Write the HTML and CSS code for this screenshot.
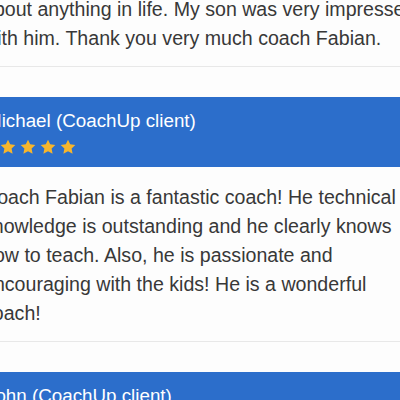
FILE: index.html
```html
<!DOCTYPE html>
<html lang="en">
<head>
    <meta charset="UTF-8">
    <title>CoachUp Reviews</title>
    <link rel="stylesheet" href="styles.css">
</head>
<body>
    <div class="reviews">
        <div class="review">
            <div class="review-body">
                <p>about anything in life. My son was very impressed with him. Thank you very much coach Fabian.</p>
            </div>
        </div>

        <div class="review">
            <div class="review-head">
                <h3>Michael (CoachUp client)</h3>
                <div class="stars">
                    <svg viewBox="0 0 24 24"><path d="M12 1l3.3 7 7.7 1-5.6 5.3 1.5 7.7L12 18.2 5.1 22l1.5-7.7L1 9l7.7-1z"/></svg>
                    <svg viewBox="0 0 24 24"><path d="M12 1l3.3 7 7.7 1-5.6 5.3 1.5 7.7L12 18.2 5.1 22l1.5-7.7L1 9l7.7-1z"/></svg>
                    <svg viewBox="0 0 24 24"><path d="M12 1l3.3 7 7.7 1-5.6 5.3 1.5 7.7L12 18.2 5.1 22l1.5-7.7L1 9l7.7-1z"/></svg>
                    <svg viewBox="0 0 24 24"><path d="M12 1l3.3 7 7.7 1-5.6 5.3 1.5 7.7L12 18.2 5.1 22l1.5-7.7L1 9l7.7-1z"/></svg>
                    <svg viewBox="0 0 24 24"><path d="M12 1l3.3 7 7.7 1-5.6 5.3 1.5 7.7L12 18.2 5.1 22l1.5-7.7L1 9l7.7-1z"/></svg>
                </div>
            </div>
            <div class="review-body">
                <p>Coach Fabian is a fantastic coach! He technical knowledge is outstanding and he clearly knows how to teach. Also, he is passionate and encouraging with the kids! He is a wonderful coach!</p>
            </div>
        </div>

        <div class="review">
            <div class="review-head">
                <h3>John (CoachUp client)</h3>
            </div>
        </div>
    </div>
</body>
</html>
```

FILE: styles.css
```css
body {
    font-family: 'Liberation Sans', Arial, sans-serif;
    margin: 0;
    height: 100vh;
    overflow: hidden;
    background-color: #fdfdfd;
}
.reviews {
    width: 460px;
    margin-left: -30px;
    margin-top: -5px;
}
.review + .review {
    margin-top: 30px;
}
.review-head {
    background-color: #2c6ecb;
    color: white;
    padding: 13px 16px 12px;
}
.review-head h3 {
    margin: 0;
    font-size: 18.8px;
    font-weight: normal;
    line-height: 22px;
}
.stars {
    display: flex;
    gap: 4px;
    margin-top: 7px;
    margin-left: -6px;
}
.stars svg {
    width: 16px;
    height: 16px;
    fill: #f7b52c;
}
.review-body {
    padding: 16px 12px 13px 13px;
    border-bottom: 1px solid #e8e8e8;
}
.review:first-child .review-body {
    padding-top: 0;
}
.review-body p {
    margin: 0;
    font-size: 19.6px;
    line-height: 29px;
    color: #383838;
}
```
